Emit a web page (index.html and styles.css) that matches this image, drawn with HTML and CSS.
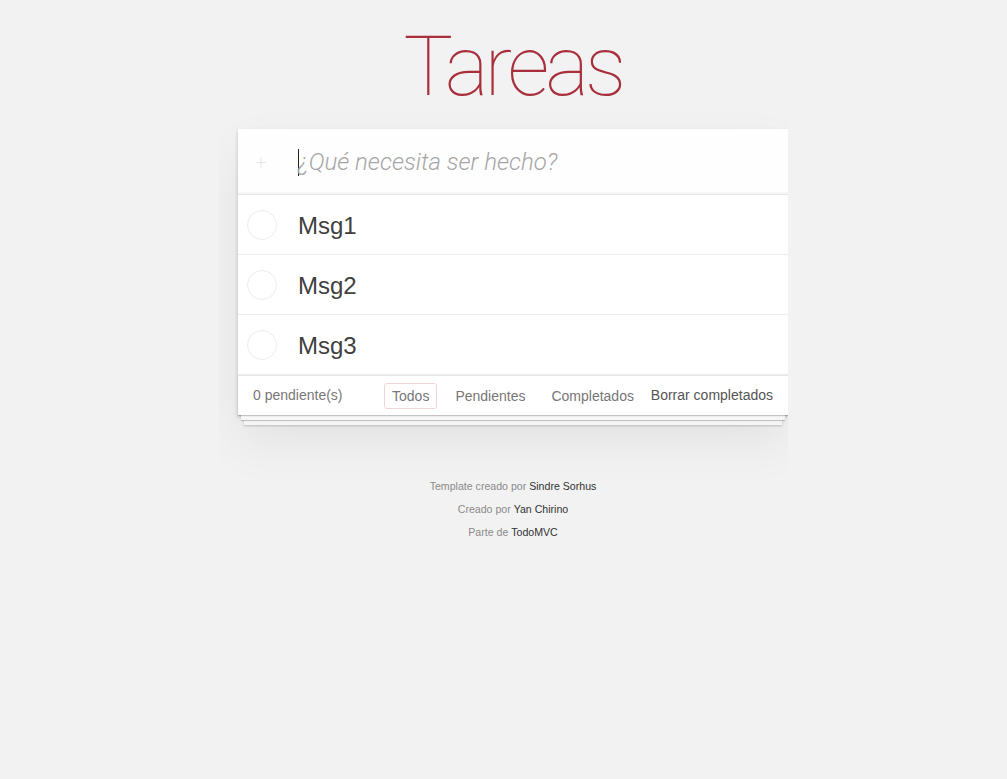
FILE: index.html
```html
<!DOCTYPE html>
<html lang="es">
<head>
<meta charset="utf-8">
<title>Tareas</title>
<link rel="stylesheet" href="styles.css">
</head>
<body>
<section class="todoapp">
  <header class="header">
    <h1 class="title">Tareas</h1>
  </header>
  <div class="panel">
    <div class="new-row">
      <span class="toggle-all">+</span>
      <div class="new-todo"><span class="caret"></span><span class="placeholder">¿Qué necesita ser hecho?</span></div>
    </div>
    <ul class="todo-list">
      <li class="todo">
        <svg class="check" width="30" height="30" viewBox="0 0 30 30"><circle cx="15" cy="15" r="14.5" fill="none" stroke="#ececec" stroke-width="1"/></svg>
        <span class="label">Msg1</span>
      </li>
      <li class="todo">
        <svg class="check" width="30" height="30" viewBox="0 0 30 30"><circle cx="15" cy="15" r="14.5" fill="none" stroke="#ececec" stroke-width="1"/></svg>
        <span class="label">Msg2</span>
      </li>
      <li class="todo">
        <svg class="check" width="30" height="30" viewBox="0 0 30 30"><circle cx="15" cy="15" r="14.5" fill="none" stroke="#ececec" stroke-width="1"/></svg>
        <span class="label">Msg3</span>
      </li>
    </ul>
    <footer class="footer">
      <span class="count">0 pendiente(s)</span>
      <ul class="filters">
        <li><a class="filter selected">Todos</a></li>
        <li><a class="filter">Pendientes</a></li>
        <li><a class="filter">Completados</a></li>
      </ul>
      <span class="clear">Borrar completados</span>
    </footer>
  </div>
</section>
<footer class="info">
  <p>Template creado por <a>Sindre Sorhus</a></p>
  <p>Creado por <a>Yan Chirino</a></p>
  <p>Parte de <a>TodoMVC</a></p>
</footer>
</body>
</html>
```
FILE: styles.css
```css
html, body { margin: 0; padding: 0; }
body {
  background: #f2f2f2;
  font-family: "Liberation Sans", Arial, sans-serif;
  font-size: 14px;
  line-height: 1.4em;
  font-weight: 300;
  color: #4d4d4d;
  min-width: 230px;
  max-width: 550px;
  margin: 0 auto;
  padding-left: 19px;
}
.todoapp { margin: 0 0 40px 0; }
.header { height: 129px; }
.title {
  margin: 0;
  padding-top: 17px;
  text-align: center;
  font-family: Roboto, "Liberation Sans", sans-serif;
  font-weight: 100;
  font-size: 83px;
  line-height: 100px;
  letter-spacing: -4px;
  color: #a82f3b;
}
.panel {
  background: #fff;
  box-shadow: 0 2px 4px rgba(0,0,0,0.2), 0 25px 50px rgba(0,0,0,0.07);
}
.new-row {
  display: flex;
  align-items: center;
  height: 65px;
  background: rgba(0,0,0,0.003);
  box-shadow: inset 0 -2px 1px rgba(0,0,0,0.03);
  border-bottom: 1px solid #e6e6e6;
}
.toggle-all {
  width: 46px;
  margin-right: 14px;
  text-align: center;
  font-family: Roboto, "Liberation Sans", sans-serif;
  font-size: 20px;
  font-weight: 100;
  color: #d6d6d6;
  position: relative;
  top: 1px;
}
.new-todo {
  display: flex;
  align-items: center;
  font-family: Roboto, "Liberation Sans", sans-serif;
  font-size: 24px;
  font-style: italic;
  font-weight: 300;
  color: #a6a6a6;
  padding-top: 2px;
}
.caret {
  width: 1px;
  height: 27px;
  background: #222;
  margin-right: -1px;
}
.todo-list { list-style: none; margin: 0; padding: 0; }
.todo {
  display: flex;
  align-items: center;
  height: 59px;
  border-bottom: 1px solid #ededed;
  font-size: 24px;
}
.check { width: 30px; height: 30px; margin: 0 0 0 9px; flex: none; }
.label {
  padding-left: 21px;
  padding-top: 4px;
  line-height: 1.2;
  color: #404040;
}
.footer {
  display: grid;
  grid-template-columns: minmax(0,1fr) auto minmax(0,1fr);
  align-items: center;
  height: 40px;
  padding: 0 15px;
  color: #777;
  border-top: 1px solid #e6e6e6;
  box-sizing: border-box;
  box-shadow: 0 1px 1px rgba(0,0,0,0.2), 0 8px 0 -3px #f6f6f6, 0 9px 1px -3px rgba(0,0,0,0.2), 0 16px 0 -6px #f6f6f6, 0 17px 2px -6px rgba(0,0,0,0.2);
}
.count { text-align: left; }
.filters { list-style: none; margin: 0; padding: 0; display: flex; gap: 4px; }
.filter {
  display: block;
  margin: 3px;
  padding: 3px 7px;
  border: 1px solid transparent;
  border-radius: 3px;
  color: inherit;
  line-height: 18px;
}
.filter.selected { border-color: rgba(175,47,47,0.2); }
.clear { text-align: right; color: #555; white-space: nowrap; }
.info {
  margin: 66px auto 0;
  color: #8a8a8a;
  font-size: 10.6px;
  text-align: center;
}
.info p { line-height: 1; margin: 12.4px 0; }
.info a { color: #333; font-weight: 400; }
```
